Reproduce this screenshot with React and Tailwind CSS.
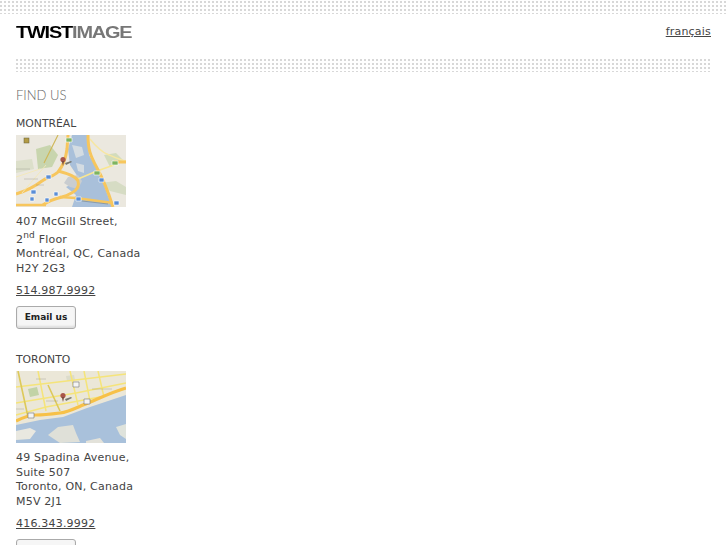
function Shields({ d, fill }) {
  return <path d={d} fill={fill} stroke="#fff" strokeWidth="0.6" />;
}

function Marker() {
  return (
    <>
      <path d="M49 28l6 -2 1 1 -6 3z" fill="#77776f" />
      <circle cx="47" cy="24.5" r="2.6" fill="#a8554a" />
      <path d="M45.8 26l1.2 5 1.2 -5z" fill="#7a4a3d" />
    </>
  );
}

function MontrealMap() {
  return (
    <svg width="110" height="72" viewBox="0 0 110 72" className="block">
      <g className="blur-[0.35px]">
        <rect width="110" height="72" fill="#ebe8df" />
        <path d="M20 14l14 -4 8 10 -6 12 -14 2z" fill="#c8d5ae" />
        <path d="M0 26l16 -2 2 10 -18 4z" fill="#dcdfca" />
        <path d="M88 20l12 -2 8 8 -14 6z" fill="#d3dcbc" />
        <path d="M84 48l16 -2 10 6v8l-16 -4z" fill="#d6dcc4" />
        <path d="M56 0H72L73 20 80 32 88 50 96 72H56L60 60 50 52 58 48 62 42 54 30 52 14z" fill="#a9c0da" />
        <path d="M52 42l10 -2 4 6 -4 8 -8 -2 -6 -4z" fill="#c9cdd0" />
        <path d="M56 10l10 2 2 8 -8 3z" fill="#d4dce2" />
        <path d="M60 28l8 2 0 8 -6 -2z" fill="#d4dce2" />
        <path d="M74 4C80 12 88 18 91 19 98 22 104 25 110 26" fill="none" stroke="#f7e7a2" strokeWidth="1.4" />
        <path d="M62 44L81 36 98 30" fill="none" stroke="#f9e690" strokeWidth="1.6" />
        <path d="M98 27H110" stroke="#f7c65d" strokeWidth="3" />
        <path d="M72 0C72 14 74 20 81 33 86 42 92 56 97 72" fill="none" stroke="#f7c65d" strokeWidth="3" />
        <path d="M0 59C10 56 18 52 26 46 32 42 38 41 42 37 47 31 50 22 51 14L52 0" fill="none" stroke="#f7c65d" strokeWidth="3" />
        <path d="M42 36C50 38 60 41 62 46 64 54 58 58 46 62 38 64 32 66 27 70" fill="none" stroke="#f7c65d" strokeWidth="3" />
        <path d="M44 62L60 63 97 68" fill="none" stroke="#f7c65d" strokeWidth="2.5" />
        <path d="M0 70H30" stroke="#f7c65d" strokeWidth="2.5" />
        <path d="M42 0L28 28" fill="none" stroke="#cfb655" strokeWidth="1.1" />
        <path d="M0 42L24 34M6 58L30 30" fill="none" stroke="#f3e8b8" strokeWidth="0.9" />
        <path d="M66 66L92 69" stroke="#4a4a3a" strokeWidth="0.7" opacity="0.45" />
        <path d="M0 34h14M8 44h14M20 50h8" stroke="#77776f" strokeWidth="0.8" opacity="0.35" />
        <Shields d="M50 3h6v4h-6zM96 26h6v4h-6zM78 36h6v4h-6z" fill="#7eb45f" />
        <Shields d="M30 40h5v4h-5zM15 55h5v4h-5zM14 62h4v4h-4zM38 57h4v4h-4zM29 63h4v4h-4zM60 62h5v4h-5zM83 43h5v4h-5zM98 66h5v4h-5z" fill="#5b8ed6" />
        <rect x="8" y="3" width="5" height="5" fill="#b39b45" stroke="#665f3a" strokeWidth="0.5" />
        <Marker />
      </g>
    </svg>
  );
}

function TorontoMap() {
  return (
    <svg width="110" height="72" viewBox="0 0 110 72" className="block">
      <g className="blur-[0.35px]">
        <rect width="110" height="72" fill="#ebe7d8" />
        <path d="M0 54L24 49 47 46 71 37 110 24V72H0z" fill="#a9c1db" />
        <path d="M0 60l14 -3 6 3 -6 8 -14 1z" fill="#e9e8e0" />
        <path d="M32 64L42 56 57 54 60 62 64 71 44 72z" fill="#dfe0d8" />
        <path d="M70 70l14 -3 4 5H70z" fill="#e3e2da" />
        <path d="M100 56l10 -3v15l-6 -4z" fill="#dfe3dc" />
        <path d="M12 18l9 -2 2 8 -9 2z" fill="#c2d3a6" />
        <path d="M50 5l8 -1 1 5 -8 1z" fill="#dcdccb" />
        <g stroke="#f5e47a" strokeWidth="1.5" fill="none">
          <path d="M0 16L110 3" />
          <path d="M0 32L60 22 110 12" />
          <path d="M0 44L30 36 84 26" />
          <path d="M22 0L30 40" />
          <path d="M54 0L62 34" />
          <path d="M68 0L74 30" />
          <path d="M82 0L88 26" />
        </g>
        <path d="M2 0L12 46M32 14L44 40" stroke="#ddc95a" strokeWidth="1.6" fill="none" />
        <path d="M0 50C6 47 12 44 20 44 28 44 36 43 44 42 52 41 60 37 67 34 82 28 96 21 110 17" fill="none" stroke="#f7c148" strokeWidth="3.2" />
        <path d="M0 38h8M30 30h12M76 18h20M20 8h10" stroke="#77776f" strokeWidth="0.8" opacity="0.35" />
        <path d="M12 42h6v5h-6zM68 28h6v5h-6zM57 11h6v5h-6z" fill="#f4f4f4" stroke="#777" strokeWidth="0.6" />
        <Marker />
      </g>
    </svg>
  );
}

function Oficina({ ciudad, mapa, lineas, telefono }) {
  return (
    <div className="mb-[23px]">
      <h3 className="text-[10.8px] leading-[15px] text-[#444] uppercase mb-[4px]">{ciudad}</h3>
      {mapa}
      <p className="mt-[8px] text-[11px] tracking-[0.2px] leading-[14.5px] text-[#444]">{lineas}</p>
      <p className="mt-[7px] text-[11px] tracking-[0.2px] leading-[15px] text-[#444]">
        <a href="#" className="underline">{telefono}</a>
      </p>
      <button className="mt-[8px] block w-[60px] h-[23px] bg-[#f6f6f6] border border-[#aaa] rounded-[3px] shadow-[inset_0_-2px_2px_#ddd] text-[9px] font-bold text-[#222]">
        Email us
      </button>
    </div>
  );
}

export default function App() {
  return (
    <div className="w-[727px] h-[545px] overflow-hidden bg-white font-['DejaVu_Sans',sans-serif]">
      <div className="h-[14px] bg-[conic-gradient(#d8d8d8_25%,transparent_0)] bg-size-[4px_4px] bg-position-[-2px_1px]" />
      <div className="px-[16px]">
        <div className="flex items-center justify-between h-[36px]">
          <div className="font-['Liberation_Sans',sans-serif] font-bold text-[17px] tracking-[-1px] leading-none origin-left scale-x-[1.17]">
            <span className="text-black">TWIST</span>
            <span className="text-[#777]">IMAGE</span>
          </div>
          <a href="#" className="underline text-[11px] tracking-[0.2px] text-[#444] pt-[1px]">français</a>
        </div>
        <div className="mt-[8px] h-[14px] bg-[conic-gradient(#d8d8d8_25%,transparent_0)] bg-size-[4px_4px] bg-position-[-2px_1px]" />
        <h2 className="mt-[14px] font-['Lato',sans-serif] font-light text-[13px] leading-[18px] text-[#666]">FIND US</h2>
        <div className="mt-[11.5px]">
          <Oficina
            ciudad="Montréal"
            mapa={<MontrealMap />}
            lineas={<>407 McGill Street,<br /><span className="block pt-[3.5px]">2<sup className="text-[9px]">nd</sup> Floor</span>Montréal, QC, Canada<br />H2Y 2G3</>}
            telefono="514.987.9992"
          />
          <Oficina
            ciudad="Toronto"
            mapa={<TorontoMap />}
            lineas={<>49 Spadina Avenue,<br />Suite 507<br />Toronto, ON, Canada<br />M5V 2J1</>}
            telefono="416.343.9992"
          />
        </div>
      </div>
    </div>
  );
}
